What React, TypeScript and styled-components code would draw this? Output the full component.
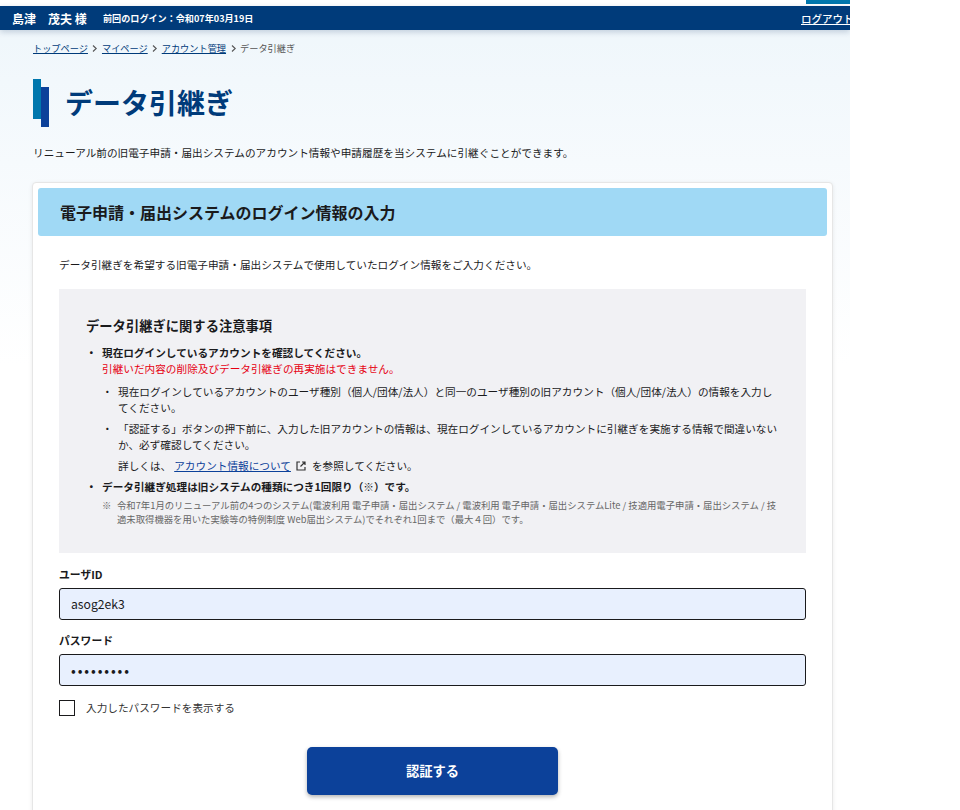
import React from "react";
import styled, { createGlobalStyle } from "styled-components";

const Global = createGlobalStyle`
  html, body { margin: 0; padding: 0; background: #fff; overflow: hidden; height: 810px; }
  body { font-family: "Noto Sans CJK JP", "Noto Sans", sans-serif; color: #1a1a1c; }
  * { box-sizing: border-box; }
`;

const Page = styled.div`
  width: 850px;
  height: 810px;
  overflow: hidden;
  background: linear-gradient(180deg, #eef6fb 0%, #f6fafd 20%, #ffffff 45%);
`;
const TopStrip = styled.div`
  height: 6px;
  background: #fff;
  display: flex;
  justify-content: flex-end;
`;
const TopAccent = styled.div`
  width: 44px;
  height: 4px;
  background: #0077ad;
`;
const Header = styled.header`
  height: 24px;
  background: #003b7a;
  box-shadow: 0 2px 6px rgba(0, 40, 90, 0.2);
  color: #fff;
  display: flex;
  align-items: center;
  padding-left: 12px;
  position: relative;
  white-space: nowrap;
`;
const UserName = styled.span`
  font-size: 12px;
  font-weight: 700;
  width: 91px;
`;
const LastLogin = styled.span`
  font-size: 9.1px;
  font-weight: 700;
  flex: 1;
`;
const Logout = styled.a`
  font-size: 10.5px;
  font-weight: 500;
  color: #fff;
  text-decoration: underline;
  margin-right: -10px;
  width: 59px;
`;
const Content = styled.main`
  padding: 0 16px 0 33px;
`;
const Crumbs = styled.nav`
  display: flex;
  align-items: center;
  height: 14px;
  margin-top: 11px;
  font-size: 9.2px;
  color: #555;
  white-space: nowrap;
`;
const Crumb = styled.a`
  color: #003b7a;
  text-decoration: underline;
`;
const Chevron = styled.svg`
  width: 9px;
  height: 9px;
  margin: 0 2.5px;
  flex: none;
`;
const TitleRow = styled.div`
  display: flex;
  align-items: center;
  margin-top: 24px;
  height: 48px;
`;
const TitleMark = styled.div`
  width: 16px;
  height: 48px;
  position: relative;
  flex: none;
  background: linear-gradient(#0077ad, #0077ad) left top / 8px 40px no-repeat,
    linear-gradient(#0c419a, #0c419a) right bottom / 8px 40px no-repeat;
`;
const Title = styled.h1`
  margin: -2px 0 0 16px;
  font-size: 28px;
  font-weight: 700;
  line-height: 48px;
  color: #003b7a;
`;
const Lead = styled.p`
  margin: 18px 0 0;
  font-size: 10.65px;
  line-height: 16px;
  white-space: nowrap;
`;
const Card = styled.section`
  margin-top: 21px;
  width: 801px;
  height: 700px;
  margin-left: -1px;
  background: #fff;
  border: 1px solid #e6e6e6;
  border-radius: 4px;
  padding: 5px;
  box-shadow: 0 1px 4px rgba(0, 0, 0, 0.08);
`;
const CardHead = styled.h2`
  margin: 0;
  height: 48px;
  background: #a0d9f5;
  border-radius: 3px;
  padding-left: 22px;
  font-size: 16px;
  font-weight: 700;
  line-height: 48px;
  color: #1a1a1c;
`;
const CardBody = styled.div`
  padding: 21px 21px 0 21px;
`;
const Intro = styled.p`
  margin: 0;
  font-size: 10.65px;
  line-height: 16px;
  white-space: nowrap;
`;
const Notice = styled.div`
  margin-top: 16px;
  height: 264px;
  background: #f1f1f4;
  padding: 28px 27px 0 27px;
`;
const NoticeTitle = styled.h3`
  margin: 0;
  font-size: 13.3px;
  font-weight: 700;
  line-height: 18px;
`;
const Item = styled.div<{ $sub?: boolean; $gap: number }>`
  position: relative;
  padding-left: ${(p) => (p.$sub ? "32px" : "16px")};
  font-size: 10.65px;
  line-height: 16px;
  margin-top: ${(p) => p.$gap}px;
  width: 694px;
  &::before {
    content: "・";
    position: absolute;
    left: ${(p) => (p.$sub ? "16px" : "0")};
    top: 0;
    font-weight: ${(p) => (p.$sub ? 400 : 700)};
  }
`;
const Strong = styled.div`
  font-weight: 700;
  white-space: nowrap;
`;
const Red = styled.div`
  color: #e60012;
  white-space: nowrap;
`;
const Para = styled.div`
  margin-top: 5px;
  display: flex;
  align-items: center;
  white-space: nowrap;
`;
const ExtLink = styled.a`
  color: #0c419a;
  text-decoration: underline;
  margin: 0 4px 0 3px;
`;
const ExtIcon = styled.svg`
  width: 12px;
  height: 12px;
  margin-right: 5px;
  flex: none;
`;
const Note = styled.div`
  position: relative;
  margin-top: 3px;
  padding-left: 31px;
  font-size: 9.36px;
  line-height: 14px;
  color: #666;
  width: 694px;
  &::before {
    content: "※";
    position: absolute;
    left: 16px;
    top: 0;
  }
`;
const FieldLabel = styled.label<{ $first?: boolean }>`
  display: block;
  margin-top: ${(p) => (p.$first ? "14px" : "13px")};
  font-size: 10.8px;
  font-weight: 700;
  line-height: 14px;
`;
const Input = styled.input<{ $secret?: boolean }>`
  display: block;
  width: 100%;
  height: 32px;
  margin-top: 7px;
  padding: 0 11px;
  background: #e8f0fe;
  border: 1px solid #1a1a1c;
  border-radius: 3px;
  font-family: "Noto Sans CJK JP", "Noto Sans", sans-serif;
  font-size: ${(p) => (p.$secret ? "14px" : "12.2px")};
  letter-spacing: ${(p) => (p.$secret ? "1.9px" : "0")};
  color: #1a1a1c;
  outline: none;
`;
const CheckRow = styled.div`
  display: flex;
  align-items: center;
  margin-top: 14px;
  height: 16px;
  font-size: 10.65px;
  color: #333;
`;
const CheckBox = styled.span`
  width: 16px;
  height: 16px;
  border: 1px solid #1a1a1c;
  background: #fff;
  margin-right: 11px;
  flex: none;
`;
const CheckText = styled.span`
  margin-bottom: 2px;
`;
const ButtonRow = styled.div`
  display: flex;
  justify-content: center;
  margin-top: 31px;
`;
const Submit = styled.button`
  width: 251px;
  height: 48px;
  padding: 0 0 2px;
  background: #0c419a;
  border: 0;
  border-radius: 5px;
  color: #fff;
  font-family: "Noto Sans CJK JP", "Noto Sans", sans-serif;
  font-size: 13.3px;
  font-weight: 700;
  box-shadow: 0 2px 4px rgba(0, 0, 0, 0.3);
`;

const Sep = () => (
  <Chevron viewBox="0 0 9 9">
    <path d="M3 1.5 L6.2 4.5 L3 7.5" fill="none" stroke="#555" strokeWidth="1.1" />
  </Chevron>
);

export default function App() {
  return (
    <Page>
      <Global />
      <TopStrip>
        <TopAccent />
      </TopStrip>
      <Header>
        <UserName>島津　茂夫 様</UserName>
        <LastLogin>前回のログイン：令和07年03月19日</LastLogin>
        <Logout>ログアウト</Logout>
      </Header>
      <Content>
        <Crumbs>
          <Crumb>トップページ</Crumb>
          <Sep />
          <Crumb>マイページ</Crumb>
          <Sep />
          <Crumb>アカウント管理</Crumb>
          <Sep />
          <span>データ引継ぎ</span>
        </Crumbs>
        <TitleRow>
          <TitleMark />
          <Title>データ引継ぎ</Title>
        </TitleRow>
        <Lead>リニューアル前の旧電子申請・届出システムのアカウント情報や申請履歴を当システムに引継ぐことができます。</Lead>
        <Card>
          <CardHead>電子申請・届出システムのログイン情報の入力</CardHead>
          <CardBody>
            <Intro>データ引継ぎを希望する旧電子申請・届出システムで使用していたログイン情報をご入力ください。</Intro>
            <Notice>
              <NoticeTitle>データ引継ぎに関する注意事項</NoticeTitle>
              <Item $gap={10}>
                <Strong>現在ログインしているアカウントを確認してください。</Strong>
                <Red>引継いだ内容の削除及びデータ引継ぎの再実施はできません。</Red>
              </Item>
              <Item $sub $gap={7}>
                現在ログインしているアカウントのユーザ種別（個人/団体/法人）と同一のユーザ種別の旧アカウント（個人/団体/法人）の情報を入力してください。
              </Item>
              <Item $sub $gap={5}>
                「認証する」ボタンの押下前に、入力した旧アカウントの情報は、現在ログインしているアカウントに引継ぎを実施する情報で間違いないか、必ず確認してください。
                <Para>
                  詳しくは、
                  <ExtLink>アカウント情報について</ExtLink>
                  <ExtIcon viewBox="0 0 12 12" fill="none" stroke="#333" strokeWidth="1.2">
                    <path d="M5 2 H2 V10 H10 V7" />
                    <path d="M7 2 H10 V5 M10 2 L5.5 6.5" />
                  </ExtIcon>
                  を参照してください。
                </Para>
              </Item>
              <Item $gap={5}>
                <Strong>データ引継ぎ処理は旧システムの種類につき1回限り（※）です。</Strong>
              </Item>
              <Note>
                令和7年1月のリニューアル前の4つのシステム(電波利用 電子申請・届出システム / 電波利用 電子申請・届出システムLite / 技適用電子申請・届出システム / 技適未取得機器を用いた実験等の特例制度 Web届出システム)でそれぞれ1回まで（最大４回）です。
              </Note>
            </Notice>
            <FieldLabel $first>ユーザID</FieldLabel>
            <Input readOnly value="asog2ek3" />
            <FieldLabel>パスワード</FieldLabel>
            <Input readOnly $secret type="password" value="password1" />
            <CheckRow>
              <CheckBox />
              <CheckText>入力したパスワードを表示する</CheckText>
            </CheckRow>
            <ButtonRow>
              <Submit>認証する</Submit>
            </ButtonRow>
          </CardBody>
        </Card>
      </Content>
    </Page>
  );
}
